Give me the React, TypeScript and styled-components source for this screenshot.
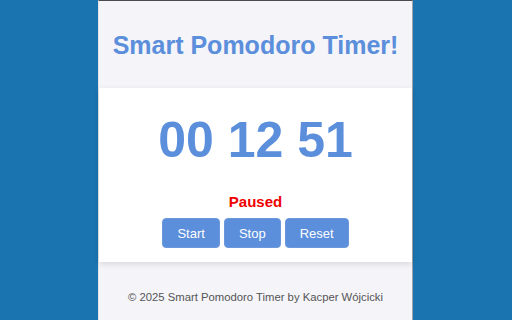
import React from "react";
import styled, { createGlobalStyle } from "styled-components";

const Global = createGlobalStyle`
  html, body { margin: 0; padding: 0; }
  body {
    background: #1a74b0;
    font-family: "Liberation Sans", Arial, sans-serif;
    width: 512px;
    height: 320px;
    overflow: hidden;
  }
`;

const Stage = styled.div`
  display: flex;
  justify-content: center;
  height: 320px;
  overflow: hidden;
`;

const Popup = styled.div`
  width: 313px;
  margin-left: -1px;
  display: flex;
  flex-direction: column;
  background: #f4f4f9;
  border-top: 1px solid #4a4a4a;
  border-left: 1px solid #e4e4ea;
  border-right: 1px solid #9fa3aa;
  height: 319px;
`;

const Header = styled.header`
  height: 87px;
  flex-shrink: 0;
  display: flex;
  align-items: center;
  justify-content: center;
  background: #f4f4f9;
`;

const Title = styled.h1`
  margin: 0;
  font-size: 25px;
  font-weight: bold;
  color: #5b8edb;
  padding-top: 1px;
`;

const Main = styled.main`
  background: #ffffff;
  display: flex;
  flex-direction: column;
  align-items: center;
  padding: 23px 0 14px;
  box-shadow: 0 2px 6px rgba(0, 0, 0, 0.12);
  position: relative;
  z-index: 1;
  flex-shrink: 0;
`;

const Clock = styled.div`
  font-size: 50px;
  font-weight: bold;
  color: #5b8edb;
  line-height: 58px;
`;

const Status = styled.div`
  margin-top: 24px;
  font-size: 15px;
  font-weight: bold;
  color: #ee0000;
  line-height: 17px;
`;

const Buttons = styled.div`
  margin-top: 8px;
  display: flex;
  gap: 4px;
`;

const Button = styled.button`
  height: 30px;
  padding: 0 14px;
  font-family: "Liberation Sans", Arial, sans-serif;
  font-size: 13px;
  color: #ffffff;
  background: #5b8edb;
  border: 1px solid #6b98dc;
  border-radius: 4px;
`;

const Footer = styled.footer`
  flex: 1;
  background: #f4f4f9;
  padding-top: 28px;
  display: flex;
  justify-content: center;
  font-size: 11.3px;
  color: #555555;
  line-height: 14px;
`;

export default function App() {
  return (
    <>
      <Global />
      <Stage>
        <Popup>
          <Header>
            <Title>Smart Pomodoro Timer!</Title>
          </Header>
          <Main>
            <Clock>00 12 51</Clock>
            <Status>Paused</Status>
            <Buttons>
              <Button>Start</Button>
              <Button>Stop</Button>
              <Button>Reset</Button>
            </Buttons>
          </Main>
          <Footer>© 2025 Smart Pomodoro Timer by Kacper Wójcicki</Footer>
        </Popup>
      </Stage>
    </>
  );
}
